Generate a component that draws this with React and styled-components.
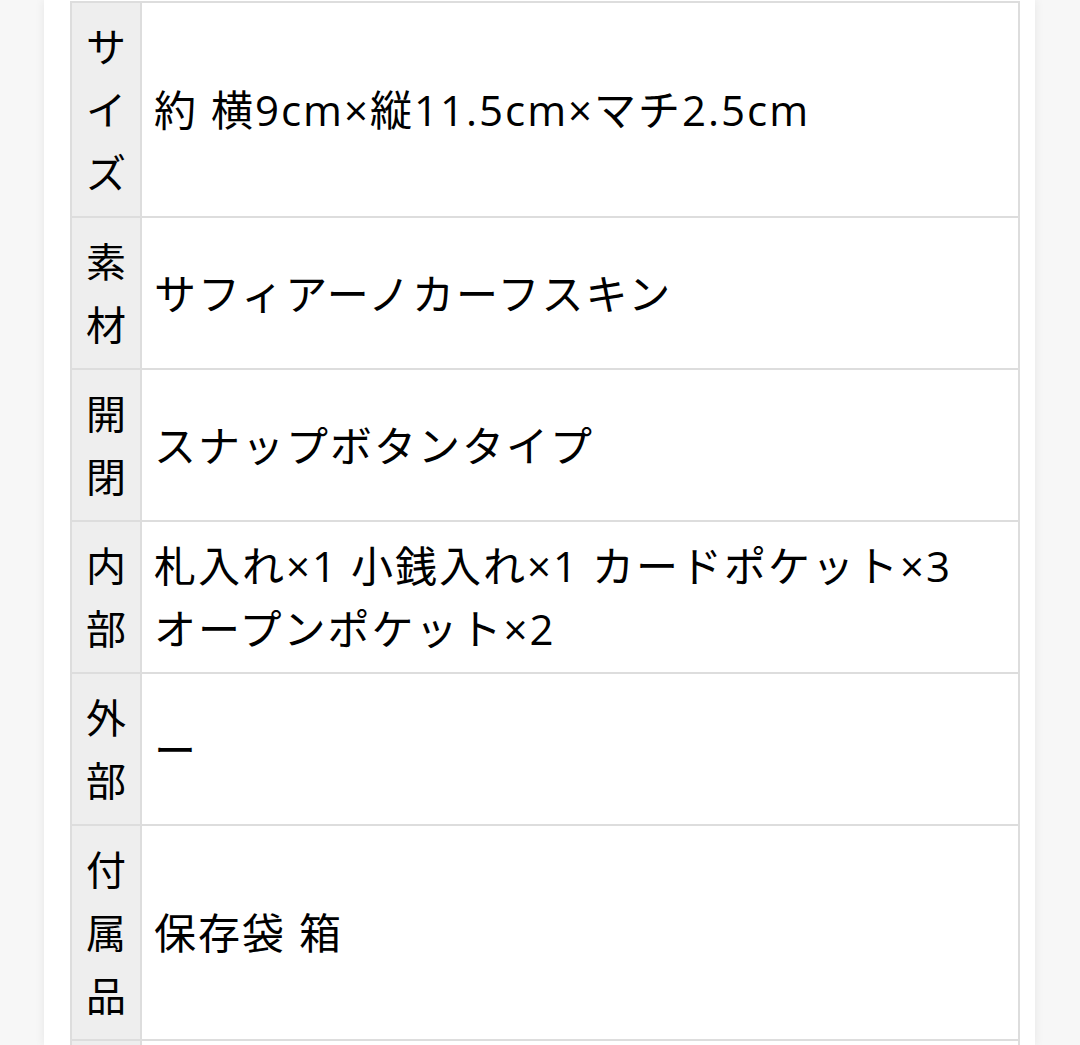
import React from 'react'
import styled, { createGlobalStyle } from 'styled-components'

const specs = [
  { label: 'サイズ', value: ['約 横9cm×縦11.5cm×マチ2.5cm'] },
  { label: '素材', value: ['サフィアーノカーフスキン'] },
  { label: '開閉', value: ['スナップボタンタイプ'] },
  { label: '内部', value: ['札入れ×1 小銭入れ×1 カードポケット×3', 'オープンポケット×2'] },
  { label: '外部', value: ['ー'] },
  { label: '付属品', value: ['保存袋 箱'] },
  { label: '', value: [''] }
]

const GlobalStyle = createGlobalStyle`
  html, body {
    margin: 0;
    height: 100%;
    overflow: hidden;
    background: #f7f7f7;
  }
  body {
    font-family: "Open Sans", "Noto Sans CJK JP", sans-serif;
    color: #000;
  }
`

const Page = styled.div`
  display: flex;
  height: 100vh;
`

const Card = styled.main`
  margin-left: 44px;
  width: 991px;
  background: #fff;
  box-shadow: 0 0 10px rgba(0, 0, 0, 0.07);
  padding: 1px 15px 0 26px;
  box-sizing: border-box;
  overflow: hidden;
`

const Table = styled.table`
  width: 100%;
  border-collapse: collapse;
  font-size: 40px;
  line-height: 63px;
`

const Head = styled.th`
  width: 40px;
  padding: 12px 14px;
  background: #eeeeee;
  border: 2px solid #dddddd;
  font-weight: 400;
  text-align: center;
  vertical-align: middle;
  word-break: break-all;
`

const Cell = styled.td`
  padding: 12px 12px;
  border: 2px solid #dddddd;
  vertical-align: middle;
  text-align: left;
  font-size: 42px;
  letter-spacing: 2px;
`

const Line = styled.div`
  white-space: nowrap;
`

export default function App() {
  return (
    <Page>
      <GlobalStyle />
      <Card>
        <Table>
          <tbody>
            {specs.map((row, i) => (
              <tr key={i}>
                <Head>{row.label}</Head>
                <Cell>
                  {row.value.map((line, j) => (
                    <Line key={j}>{line}</Line>
                  ))}
                </Cell>
              </tr>
            ))}
          </tbody>
        </Table>
      </Card>
    </Page>
  )
}
